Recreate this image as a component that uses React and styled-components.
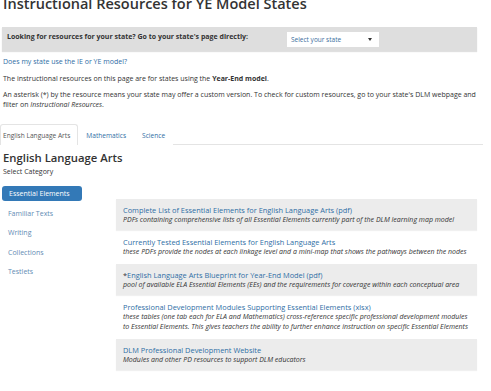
import React from "react";
import styled, { createGlobalStyle } from "styled-components";

const Global = createGlobalStyle`
  html, body { margin: 0; padding: 0; background: #fff; }
  body { font-family: "Open Sans", "Liberation Sans", sans-serif; color: #333; overflow: hidden; }
  * { box-sizing: border-box; }
`;

const Page = styled.div`
  width: 491px;
  height: 391px;
  overflow: hidden;
  padding: 0 14px 0 2px;
  display: flex;
  flex-direction: column;
`;

const Title = styled.h1`
  margin: -3px 0 0 1px;
  font-size: 14.5px;
  line-height: 14px;
  font-weight: 600;
  color: #333;
  white-space: nowrap;
`;

const StateBar = styled.div`
  margin-top: 16px;
  height: 24px;
  background: #dedede;
  box-shadow: 0 1px 1px rgba(0,0,0,0.12);
  display: flex;
  align-items: flex-start;
  padding: 0 0 0 5px;
`;

const BarLabel = styled.div`
  width: 280px;
  padding-top: 5px;
  font-size: 7px;
  line-height: 9px;
  font-weight: 700;
  color: #333;
`;

const SelectBox = styled.div`
  margin-top: 5px;
  width: 92px;
  height: 15px;
  background: #fff;
  display: flex;
  align-items: center;
  justify-content: space-between;
  padding: 0 7px 0 4px;
  font-size: 6.5px;
  color: #3c6e9e;
`;

const Caret = styled.span`
  width: 0;
  height: 0;
  border-left: 2.5px solid transparent;
  border-right: 2.5px solid transparent;
  border-top: 3px solid #333;
`;

const Link = styled.a`
  color: #2f6ea5;
  text-decoration: none;
`;

const Para = styled.p`
  margin: ${(p) => p.$mt}px 0 0 1px;
  font-size: 7px;
  line-height: 10px;
  color: #333;
`;

const Tabs = styled.div`
  margin-top: 14px;
  margin-right: -6px;
  height: 21px;
  display: flex;
  border-bottom: 1px solid #e4e4e4;
`;

const Tab = styled.div`
  height: 21px;
  display: flex;
  align-items: center;
  font-size: 6.6px;
  color: ${(p) => (p.$active ? "#555" : "#2f6ea5")};
  background: #fff;
  border: 1px solid ${(p) => (p.$active ? "#e4e4e4" : "transparent")};
  border-bottom: none;
  border-radius: 3px 3px 0 0;
  margin-bottom: -1px;
  margin-left: ${(p) => (p.$first ? "-2px" : "0")};
  padding: ${(p) => (p.$first ? "0 7px 0 2px" : "0 7px")};
`;

const Heading = styled.h2`
  margin: 4px 0 0 1px;
  font-size: 11.3px;
  line-height: 18px;
  font-weight: 600;
  color: #333;
`;

const Sub = styled.div`
  margin: 0 0 0 1px;
  font-size: 7px;
  line-height: 9px;
  color: #333;
`;

const Main = styled.div`
  margin-top: 10px;
  display: grid;
  grid-template-columns: 80px 1fr;
  column-gap: 34px;
  align-items: start;
`;

const SideNav = styled.div`
  display: flex;
  flex-direction: column;
  gap: 4.5px;
`;

const SideItem = styled.div`
  height: 15px;
  display: flex;
  align-items: center;
  padding-left: ${(p) => (p.$active ? "7px" : "6px")};
  font-size: 7px;
  border-radius: 3px;
  background: ${(p) => (p.$active ? "#3379b7" : "transparent")};
  color: ${(p) => (p.$active ? "#fff" : "#5f8cb4")};
`;

const Resources = styled.div`
  margin-top: 13px;
  display: flex;
  flex-direction: column;
  gap: 1.5px;
`;

const Resource = styled.div`
  padding: 5.5px 7px;
  background: ${(p) => (p.$shaded ? "#ececec" : "#fff")};
  box-shadow: ${(p) => (p.$shaded ? "0 1px 1px rgba(0,0,0,0.06)" : "none")};
  font-size: 7px;
  line-height: 10px;
`;

const ResourceTitle = styled.div`
  font-size: 7.4px;
`;

const Desc = styled.div`
  font-style: italic;
  color: #333;
`;

const resources = [
  {
    link: "Complete List of Essential Elements for English Language Arts (pdf)",
    desc: "PDFs containing comprehensive lists of all Essential Elements currently part of the DLM learning map model",
  },
  {
    link: "Currently Tested Essential Elements for English Language Arts",
    desc: "these PDFs provide the nodes at each linkage level and a mini-map that shows the pathways between the nodes",
  },
  {
    star: true,
    link: "English Language Arts Blueprint for Year-End Model (pdf)",
    desc: "pool of available ELA Essential Elements (EEs) and the requirements for coverage within each conceptual area",
  },
  {
    link: "Professional Development Modules Supporting Essential Elements (xlsx)",
    desc: "these tables (one tab each for ELA and Mathematics) cross-reference specific professional development modules to Essential Elements. This gives teachers the ability to further enhance instruction on specific Essential Elements",
  },
  {
    link: "DLM Professional Development Website",
    desc: "Modules and other PD resources to support DLM educators",
  },
];

const categories = ["Essential Elements", "Familiar Texts", "Writing", "Collections", "Testlets"];

export default function App() {
  return (
    <>
      <Global />
      <Page>
        <Title>Instructional Resources for YE Model States</Title>
        <StateBar>
          <BarLabel>Looking for resources for your state? Go to your state's page directly:</BarLabel>
          <SelectBox>
            <span>Select your state</span>
            <Caret />
          </SelectBox>
        </StateBar>
        <Para $mt={6}>
          <Link href="#">Does my state use the IE or YE model?</Link>
        </Para>
        <Para $mt={6.5}>
          The instructional resources on this page are for states using the <b>Year-End model</b>.
        </Para>
        <Para $mt={6.5}>
          An asterisk (*) by the resource means your state may offer a custom version. To check for custom resources, go to your state's DLM webpage and filter on <i>Instructional Resources</i>.
        </Para>
        <Tabs>
          <Tab $active $first>English Language Arts</Tab>
          <Tab>Mathematics</Tab>
          <Tab>Science</Tab>
        </Tabs>
        <Heading>English Language Arts</Heading>
        <Sub>Select Category</Sub>
        <Main>
          <SideNav>
            {categories.map((c, i) => (
              <SideItem key={c} $active={i === 0}>{c}</SideItem>
            ))}
          </SideNav>
          <Resources>
            {resources.map((r, i) => (
              <Resource key={r.link} $shaded={i % 2 === 0}>
                <ResourceTitle>
                  {r.star && "*"}
                  <Link href="#">{r.link}</Link>
                </ResourceTitle>
                <Desc>{r.desc}</Desc>
              </Resource>
            ))}
          </Resources>
        </Main>
      </Page>
    </>
  );
}
